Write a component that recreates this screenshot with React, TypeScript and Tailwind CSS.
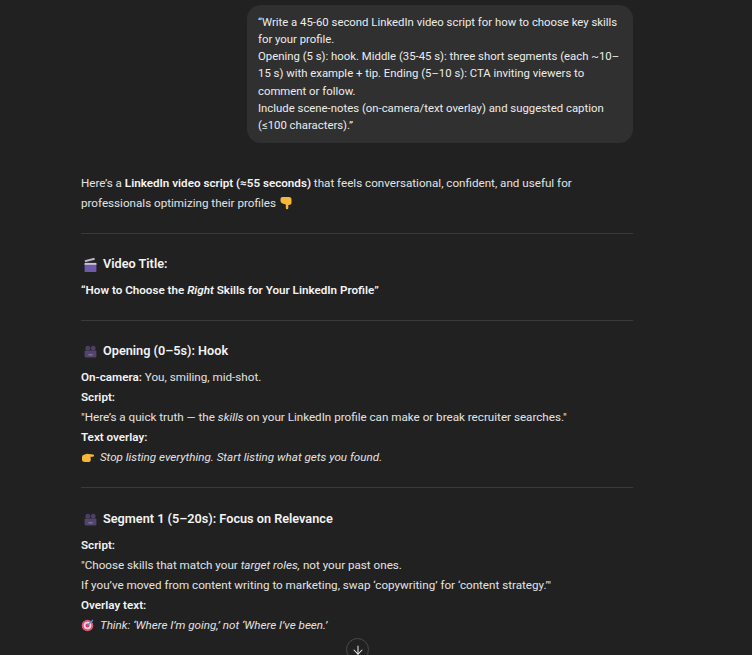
import React from 'react';
import { ArrowDown } from 'lucide-react';

const Clapper = () => (
  <svg width="15" height="15" viewBox="0 0 14 14" className="shrink-0">
    <rect x="1.5" y="6" width="11" height="8" rx="0.8" fill="#6f5aa8" />
    <path d="M1.5 3 L10.5 0.6 L11.2 2.6 L2 5 Z" fill="#b9b3c9" />
    <rect x="1.5" y="5.5" width="11" height="1.8" fill="#c9c4d6" />
  </svg>
);

const Camera = () => (
  <svg width="15" height="15" viewBox="0 0 14 14" className="shrink-0">
    <circle cx="4.5" cy="4" r="2.3" fill="#4c3f63" />
    <circle cx="9.5" cy="4" r="2.3" fill="#4c3f63" />
    <rect x="1.5" y="6" width="11" height="6.5" rx="1" fill="#53446e" />
    <rect x="5" y="9.5" width="4" height="1.2" fill="#85789c" />
  </svg>
);

const PointDown = () => (
  <svg width="14" height="14" viewBox="0 0 14 14" className="inline-block align-[-3px]">
    <path d="M1.5 3 Q1.5 1 3.5 1 L10 1 Q12.5 1 12.5 3.5 L12.5 7 Q12.5 8.5 11 8.8 L9.3 9 L9.3 12 Q9.3 13.3 8 13.3 Q6.8 13.3 6.8 12 L6.8 8.5 L3.5 7.5 Q1.5 6.8 1.5 5 Z" fill="#f5b63c" />
  </svg>
);

const PointRight = () => (
  <svg width="14" height="14" viewBox="0 0 14 14" className="inline-block align-[-3px]">
    <path d="M1 7 Q1 5 3 4.8 L6 3.8 L12 4.5 Q13.5 4.8 13 6 Q12.6 7 11 6.8 L9.5 6.8 L9.8 10 Q9.6 12 8 12 L4 12 Q1 12 1 9.5 Z" fill="#f5b63c" />
  </svg>
);

const Target = () => (
  <svg width="14" height="14" viewBox="0 0 14 14" className="inline-block align-[-3px]">
    <circle cx="6.5" cy="7.5" r="5.8" fill="#e0567a" />
    <circle cx="6.5" cy="7.5" r="3.8" fill="#f3d5dc" />
    <circle cx="6.5" cy="7.5" r="2" fill="#d83a62" />
    <path d="M6.5 7.5 L12 2" stroke="#5b8fd0" strokeWidth="1.2" />
  </svg>
);

const Heading = ({ icon, children }: { icon: React.ReactNode; children: React.ReactNode }) => (
  <h3 className="flex items-center gap-[5px] pl-[2px] text-[12.7px] leading-[20px] font-semibold text-[#f3f3f3]">
    {icon}
    <span>{children}</span>
  </h3>
);

const Line = ({ children }: { children: React.ReactNode }) => (
  <p className="h-5 whitespace-nowrap">{children}</p>
);

const B = ({ children }: { children: React.ReactNode }) => (
  <strong className="font-semibold text-[#f3f3f3]">{children}</strong>
);

export default function App() {
  return (
    <div className="relative h-[655px] w-[752px] overflow-hidden bg-[#212121] text-[11.65px] leading-5 text-[#e3e3e3] [font-family:Roboto,sans-serif]">
      <div className="ml-[81px] w-[552px] pt-[5px]">
        <div className="ml-auto w-[386px] rounded-[14px] bg-[#303030] px-[11px] py-[8.5px] text-[11.35px] leading-[17.3px] text-[#ececec]">
          <p>“Write a 45-60 second LinkedIn video script for how to choose key skills for your profile.</p>
          <p>Opening (5 s): hook. Middle (35-45 s): three short segments (each ~10–15 s) with example + tip. Ending (5–10 s): CTA inviting viewers to comment or follow.</p>
          <p>Include scene-notes (on-camera/text overlay) and suggested caption (≤100 characters).”</p>
        </div>

        <div className="mt-[30px]">
          <Line>Here’s a <B>LinkedIn video script (≈55 seconds)</B> that feels conversational, confident, and useful for</Line>
          <Line>professionals optimizing their profiles <PointDown /></Line>
        </div>

        <hr className="mt-5 border-[#3a3a3a]" />

        <div className="mt-[20px]">
          <Heading icon={<Clapper />}>Video Title:</Heading>
          <p className="mt-[6px] h-5"><B>“How to Choose the <em>Right</em> Skills for Your LinkedIn Profile”</B></p>
        </div>

        <hr className="mt-5 border-[#3a3a3a]" />

        <div className="mt-[20px]">
          <Heading icon={<Camera />}>Opening (0–5s): Hook</Heading>
          <div className="mt-[6px]">
            <Line><B>On-camera:</B> You, smiling, mid-shot.</Line>
            <Line><B>Script:</B></Line>
            <Line>"Here’s a quick truth — the <em>skills</em> on your LinkedIn profile can make or break recruiter searches."</Line>
            <Line><B>Text overlay:</B></Line>
            <Line><PointRight /> <em className="ml-[2px]">Stop listing everything. Start listing what gets you found.</em></Line>
          </div>
        </div>

        <hr className="mt-5 border-[#3a3a3a]" />

        <div className="mt-[21px]">
          <Heading icon={<Camera />}>Segment 1 (5–20s): Focus on Relevance</Heading>
          <div className="mt-[6px]">
            <Line><B>Script:</B></Line>
            <Line>"Choose skills that match your <em>target roles,</em> not your past ones.</Line>
            <Line>If you’ve moved from content writing to marketing, swap ‘copywriting’ for ‘content strategy.’"</Line>
            <Line><B>Overlay text:</B></Line>
            <Line><Target /> <em className="ml-[2px]">Think: ‘Where I’m going,’ not ‘Where I’ve been.’</em></Line>
          </div>
        </div>
      </div>

      <button className="absolute left-[346px] top-[638px] flex h-[23px] w-[23px] items-center justify-center rounded-full border border-[#4a4a4a] bg-[#212121] text-[#e6e6e6]">
        <ArrowDown size={14} strokeWidth={1.8} />
      </button>
    </div>
  );
}
